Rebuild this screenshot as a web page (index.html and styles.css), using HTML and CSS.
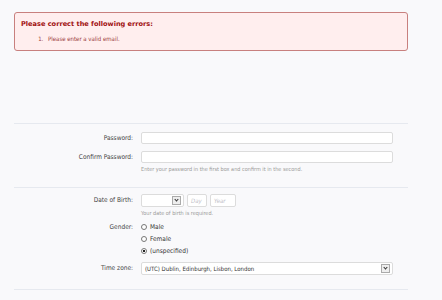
FILE: index.html
```html
<!DOCTYPE html>
<html lang="en">
<head>
    <meta charset="UTF-8">
    <title>Register</title>
    <link rel="stylesheet" href="styles.css">
</head>
<body>
    <!-- Error summary -->
    <div class="errors">
        <h3>Please correct the following errors:</h3>
        <ol>
            <li>Please enter a valid email.</li>
        </ol>
    </div>

    <div class="form">
        <div class="block">
            <div class="row">
                <label>Password:</label>
                <div class="ctrl"><span class="input"></span></div>
            </div>
            <div class="row">
                <label>Confirm Password:</label>
                <div class="ctrl">
                    <span class="input"></span>
                    <p class="hint">Enter your password in the first box and confirm it in the second.</p>
                </div>
            </div>
        </div>

        <div class="block">
            <div class="row">
                <label>Date of Birth:</label>
                <div class="ctrl">
                    <div class="dob">
                        <span class="select month"><span class="arrow"></span></span>
                        <span class="input small">Day</span>
                        <span class="input year">Year</span>
                    </div>
                    <p class="hint">Your date of birth is required.</p>
                </div>
            </div>
            <div class="row">
                <label>Gender:</label>
                <div class="ctrl radios">
                    <span class="radio"><i></i>Male</span>
                    <span class="radio"><i></i>Female</span>
                    <span class="radio on"><i></i>(unspecified)</span>
                </div>
            </div>
            <div class="row tz">
                <label>Time zone:</label>
                <div class="ctrl">
                    <span class="select wide">(UTC) Dublin, Edinburgh, Lisbon, London<span class="arrow"></span></span>
                </div>
            </div>
        </div>
        <div class="block"></div>
    </div>
</body>
</html>
```

FILE: styles.css
```css
* {
    margin: 0;
    padding: 0;
    box-sizing: border-box;
}
body {
    font-family: 'DejaVu Sans Condensed', 'DejaVu Sans', sans-serif;
    font-size: 6.5px;
    background-color: #f9f9fb;
    color: #333;
    width: 442px;
    height: 300px;
    overflow: hidden;
}
/* Error summary */
.errors {
    margin: 12px 34px 0 14px;
    height: 39px;
    padding: 7px 6px 0;
    background-color: #ffeeee;
    border: 1px solid #c8807e;
    border-radius: 3px;
}
.errors h3 {
    font-family: 'DejaVu Sans', sans-serif;
    font-size: 6.6px;
    font-weight: bold;
    color: #a01010;
}
.errors ol {
    margin: 7px 0 0 24px;
    color: #9a3a3a;
    font-size: 6px;
}
.errors li {
    padding-left: 3px;
}
/* Form */
.form {
    margin: 72px 34px 0 14px;
}
.block {
    border-top: 1px solid #e6e9ef;
    padding: 8px 0 15px;
}
.block + .block {
    padding: 6px 0 14px;
}
.row {
    display: grid;
    grid-template-columns: 119px 1fr;
    column-gap: 8px;
    margin-bottom: 7px;
}
.row:last-child {
    margin-bottom: 0;
}
.row.tz {
    margin-top: 5px;
}
label {
    text-align: right;
    line-height: 12px;
    color: #444;
}
.ctrl {
    padding-right: 15px;
}
.input {
    display: block;
    height: 12px;
    background-color: #fff;
    border: 1px solid #dcdcdc;
    border-radius: 2px;
    color: #c0c0c8;
    font-style: italic;
    font-size: 6px;
    line-height: 10px;
    padding-left: 3px;
}
.hint {
    margin-top: 3px;
    font-size: 5.5px;
    color: #999;
}
.dob {
    display: flex;
    gap: 3px;
    height: 13px;
}
.dob .input {
    height: 13px;
    line-height: 11px;
}
.small {
    width: 20px;
}
.year {
    width: 26px;
}
.select {
    position: relative;
    display: block;
    height: 13px;
    background-color: #fff;
    border: 1px solid #dcdcdc;
    border-radius: 2px;
    padding-left: 3px;
    line-height: 11px;
    font-size: 6px;
    color: #333;
}
.month {
    width: 43px;
}
.arrow {
    position: absolute;
    right: 2px;
    top: 1px;
    width: 9px;
    height: 9px;
    border: 1px solid #aaa;
    background-color: #eee;
}
.arrow::after {
    content: '';
    position: absolute;
    left: 2px;
    top: 1px;
    width: 2px;
    height: 2px;
    border-right: 1.3px solid #333;
    border-bottom: 1.3px solid #333;
    transform: rotate(45deg);
}
.radios {
    display: flex;
    flex-direction: column;
    gap: 4px;
}
.radio {
    display: flex;
    align-items: center;
    gap: 3px;
    height: 8px;
    line-height: 8px;
    color: #333;
}
.radio i {
    width: 6px;
    height: 6px;
    border: 1px solid #777;
    border-radius: 50%;
    background-color: #fff;
}
.radio.on i {
    background: radial-gradient(circle, #222 45%, #fff 55%);
}
.row:has(.radios) label {
    line-height: 8px;
}
.wide {
    height: 13px;
    line-height: 11px;
}
.wide .arrow {
    top: 1px;
    height: 9px;
}
```
